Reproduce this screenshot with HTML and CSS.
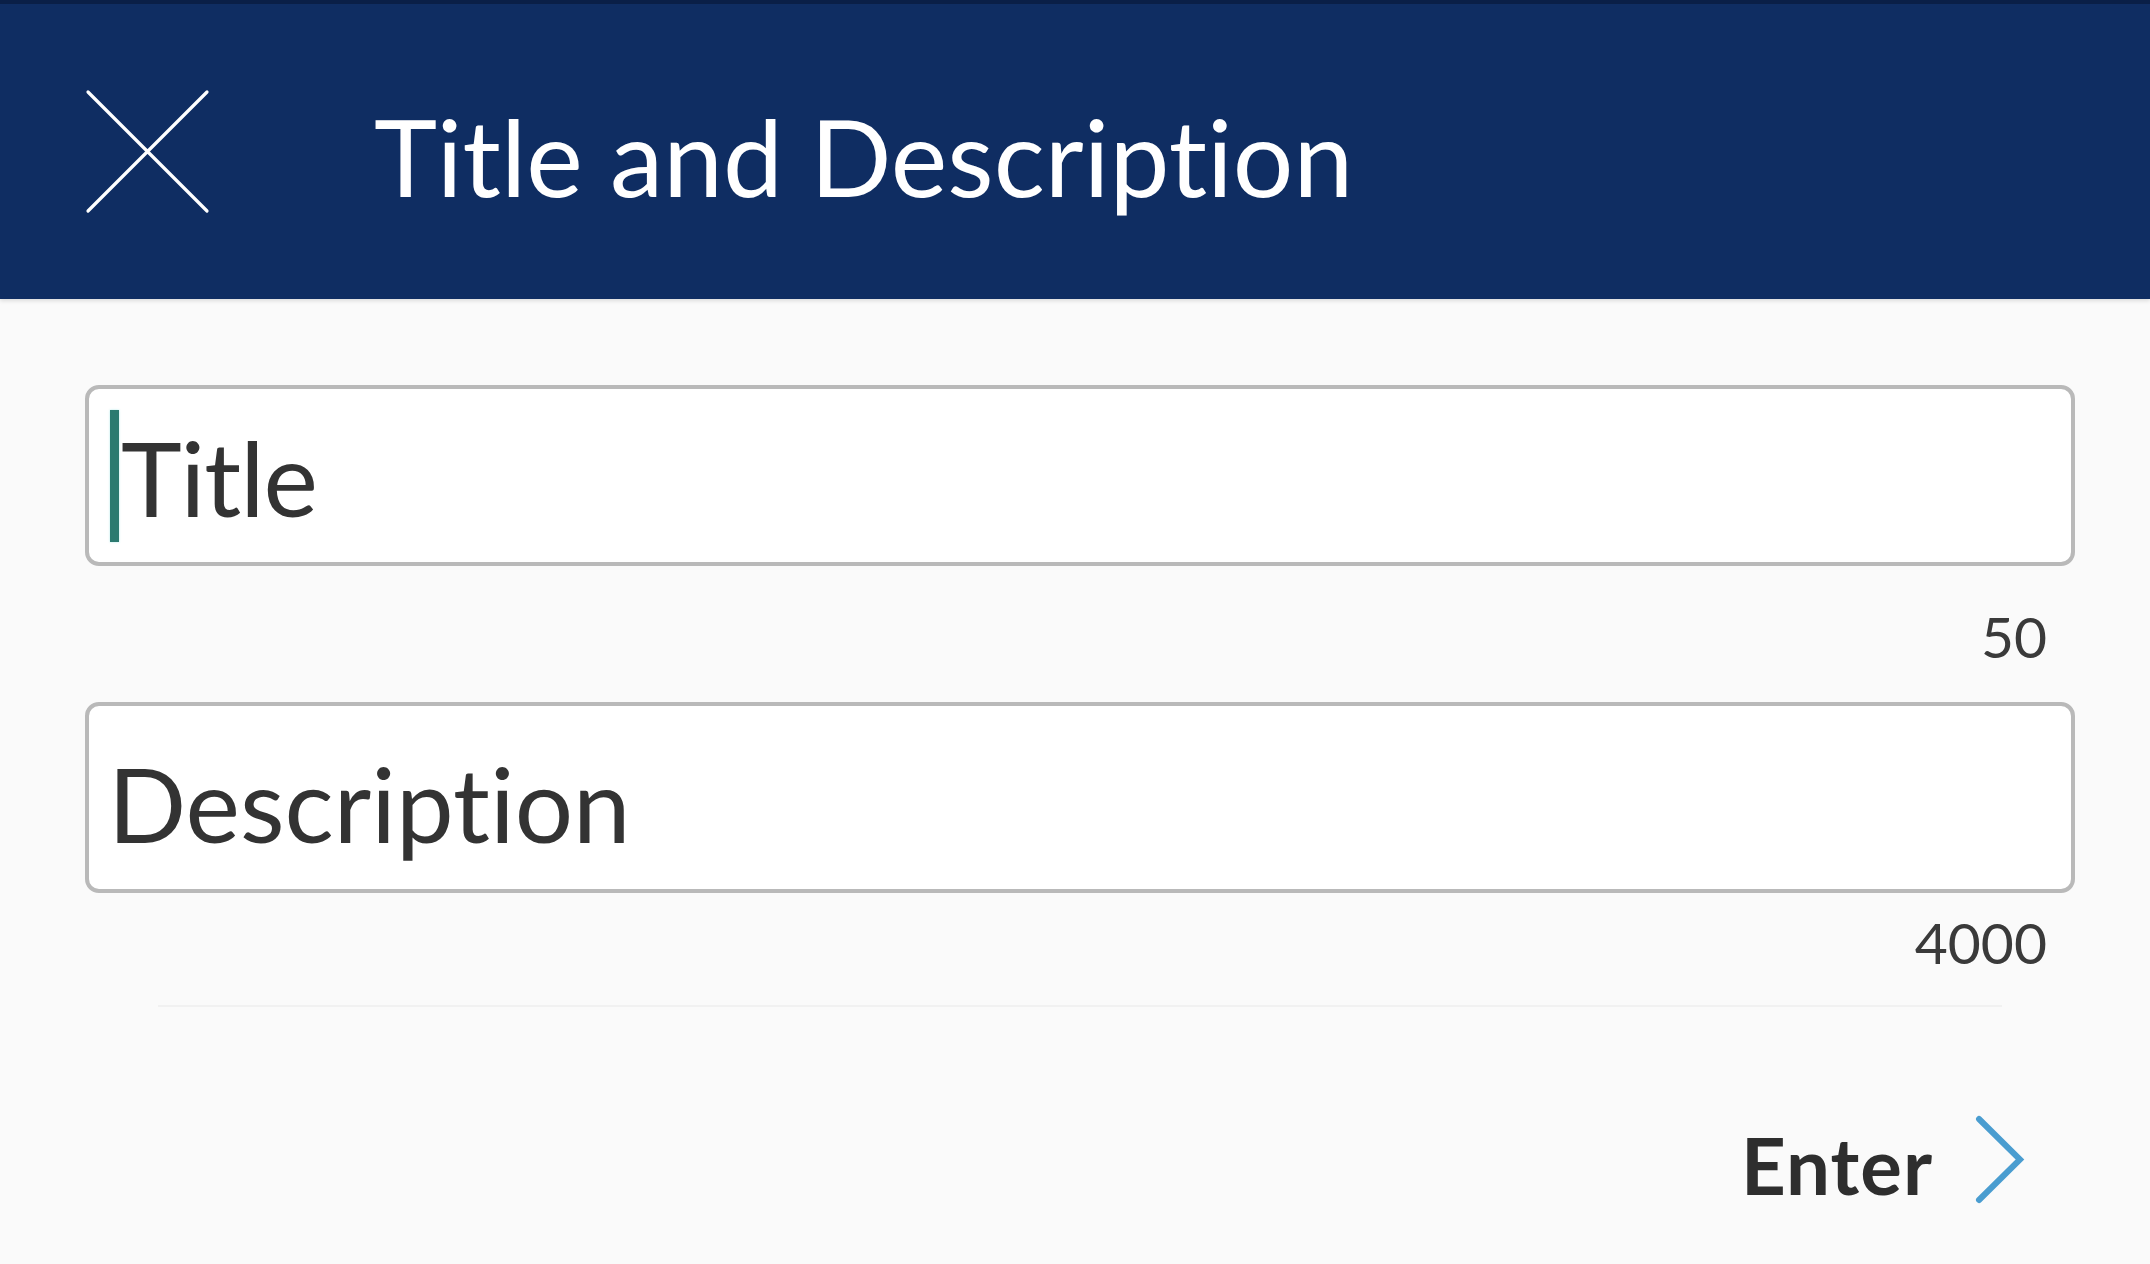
FILE: index.html
```html
<!DOCTYPE html>
<html lang="en">
<head>
<meta charset="utf-8">
<title>Title and Description</title>
<link rel="stylesheet" href="styles.css">
</head>
<body>
<header class="app-bar">
  <button class="close-btn" aria-label="Close">
    <svg width="125" height="125" viewBox="0 0 125 125"><path d="M3 3 L122 122 M122 3 L3 122" stroke="#ffffff" stroke-width="3.2" stroke-linecap="round" fill="none"/></svg>
  </button>
  <h1 class="app-title">Title and Description</h1>
</header>
<main class="form">
  <div class="field field-title">
    <span class="caret"></span><span class="field-text">Title</span>
  </div>
  <div class="counter counter-title">50</div>
  <div class="field field-desc">
    <span class="field-text">Description</span>
  </div>
  <div class="counter counter-desc">4000</div>
  <div class="divider"></div>
  <div class="actions">
    <span class="enter-label">Enter</span>
    <svg class="chevron" width="50" height="89" viewBox="0 0 50 89"><path d="M4 4 L45 44.5 L4 85" stroke="#4a9dd0" stroke-width="6" stroke-linecap="round" stroke-linejoin="miter" fill="none"/></svg>
  </div>
</main>
</body>
</html>
```
FILE: styles.css
```css
html, body {
  margin: 0;
  padding: 0;
}
body {
  background: #fafafa;
  font-family: "Lato", "Open Sans", "Liberation Sans", sans-serif;
  font-variant-ligatures: none;
  font-feature-settings: "liga" 0, "clig" 0;
  color: #333333;
  width: 2150px;
  height: 1264px;
  overflow: hidden;
}
.app-bar {
  box-sizing: border-box;
  height: 299px;
  border-top: 4px solid #0a1f47;
  background: #0f2d62;
  display: flex;
  align-items: center;
  padding-left: 85px;
  box-shadow: 0 2px 4px rgba(0, 0, 0, 0.12);
}
.close-btn {
  background: none;
  border: 0;
  padding: 0;
  width: 125px;
  height: 125px;
  display: block;
}
.close-btn svg {
  display: block;
}
.app-title {
  margin: 0 0 0 164px;
  font-weight: 400;
  font-size: 107px;
  line-height: 1;
  color: #ffffff;
  padding-top: 8px;
}
.form {
  padding: 86px 75px 0 85px;
}
.field {
  box-sizing: border-box;
  background: #ffffff;
  border: 4px solid #b9b9b9;
  border-radius: 14px;
  display: flex;
  align-items: center;
}
.field-title {
  height: 181px;
  padding-left: 21px;
}
.field-desc {
  height: 191px;
  padding-left: 19px;
  padding-top: 8px;
}
.caret {
  display: block;
  width: 9px;
  height: 132px;
  background: #2c7a70;
  box-shadow: 0 0 2px rgba(120, 220, 220, 0.6);
}
.field-text {
  font-size: 103px;
  line-height: 1;
  color: #333333;
  padding-top: 4px;
}
.field-title .field-text {
  margin-left: 2px;
  letter-spacing: -1px;
}
.counter {
  text-align: right;
  padding-right: 28px;
  font-size: 57px;
  line-height: 57px;
  color: #3a3a3a;
}
.counter-title {
  margin-top: 42px;
  margin-bottom: 37px;
}
.counter-desc {
  margin-top: 21px;
}
.divider {
  margin: 34px 73px 0 73px;
  height: 2px;
  background: #f1f1f1;
}
.actions {
  display: flex;
  justify-content: flex-end;
  align-items: center;
  margin-top: 108px;
  padding-right: 50px;
}
.enter-label {
  font-weight: 700;
  font-size: 78px;
  line-height: 1;
  letter-spacing: 1px;
  color: #2e2e2e;
  padding-top: 10px;
}
.chevron {
  display: block;
  margin-left: 42px;
}
```
